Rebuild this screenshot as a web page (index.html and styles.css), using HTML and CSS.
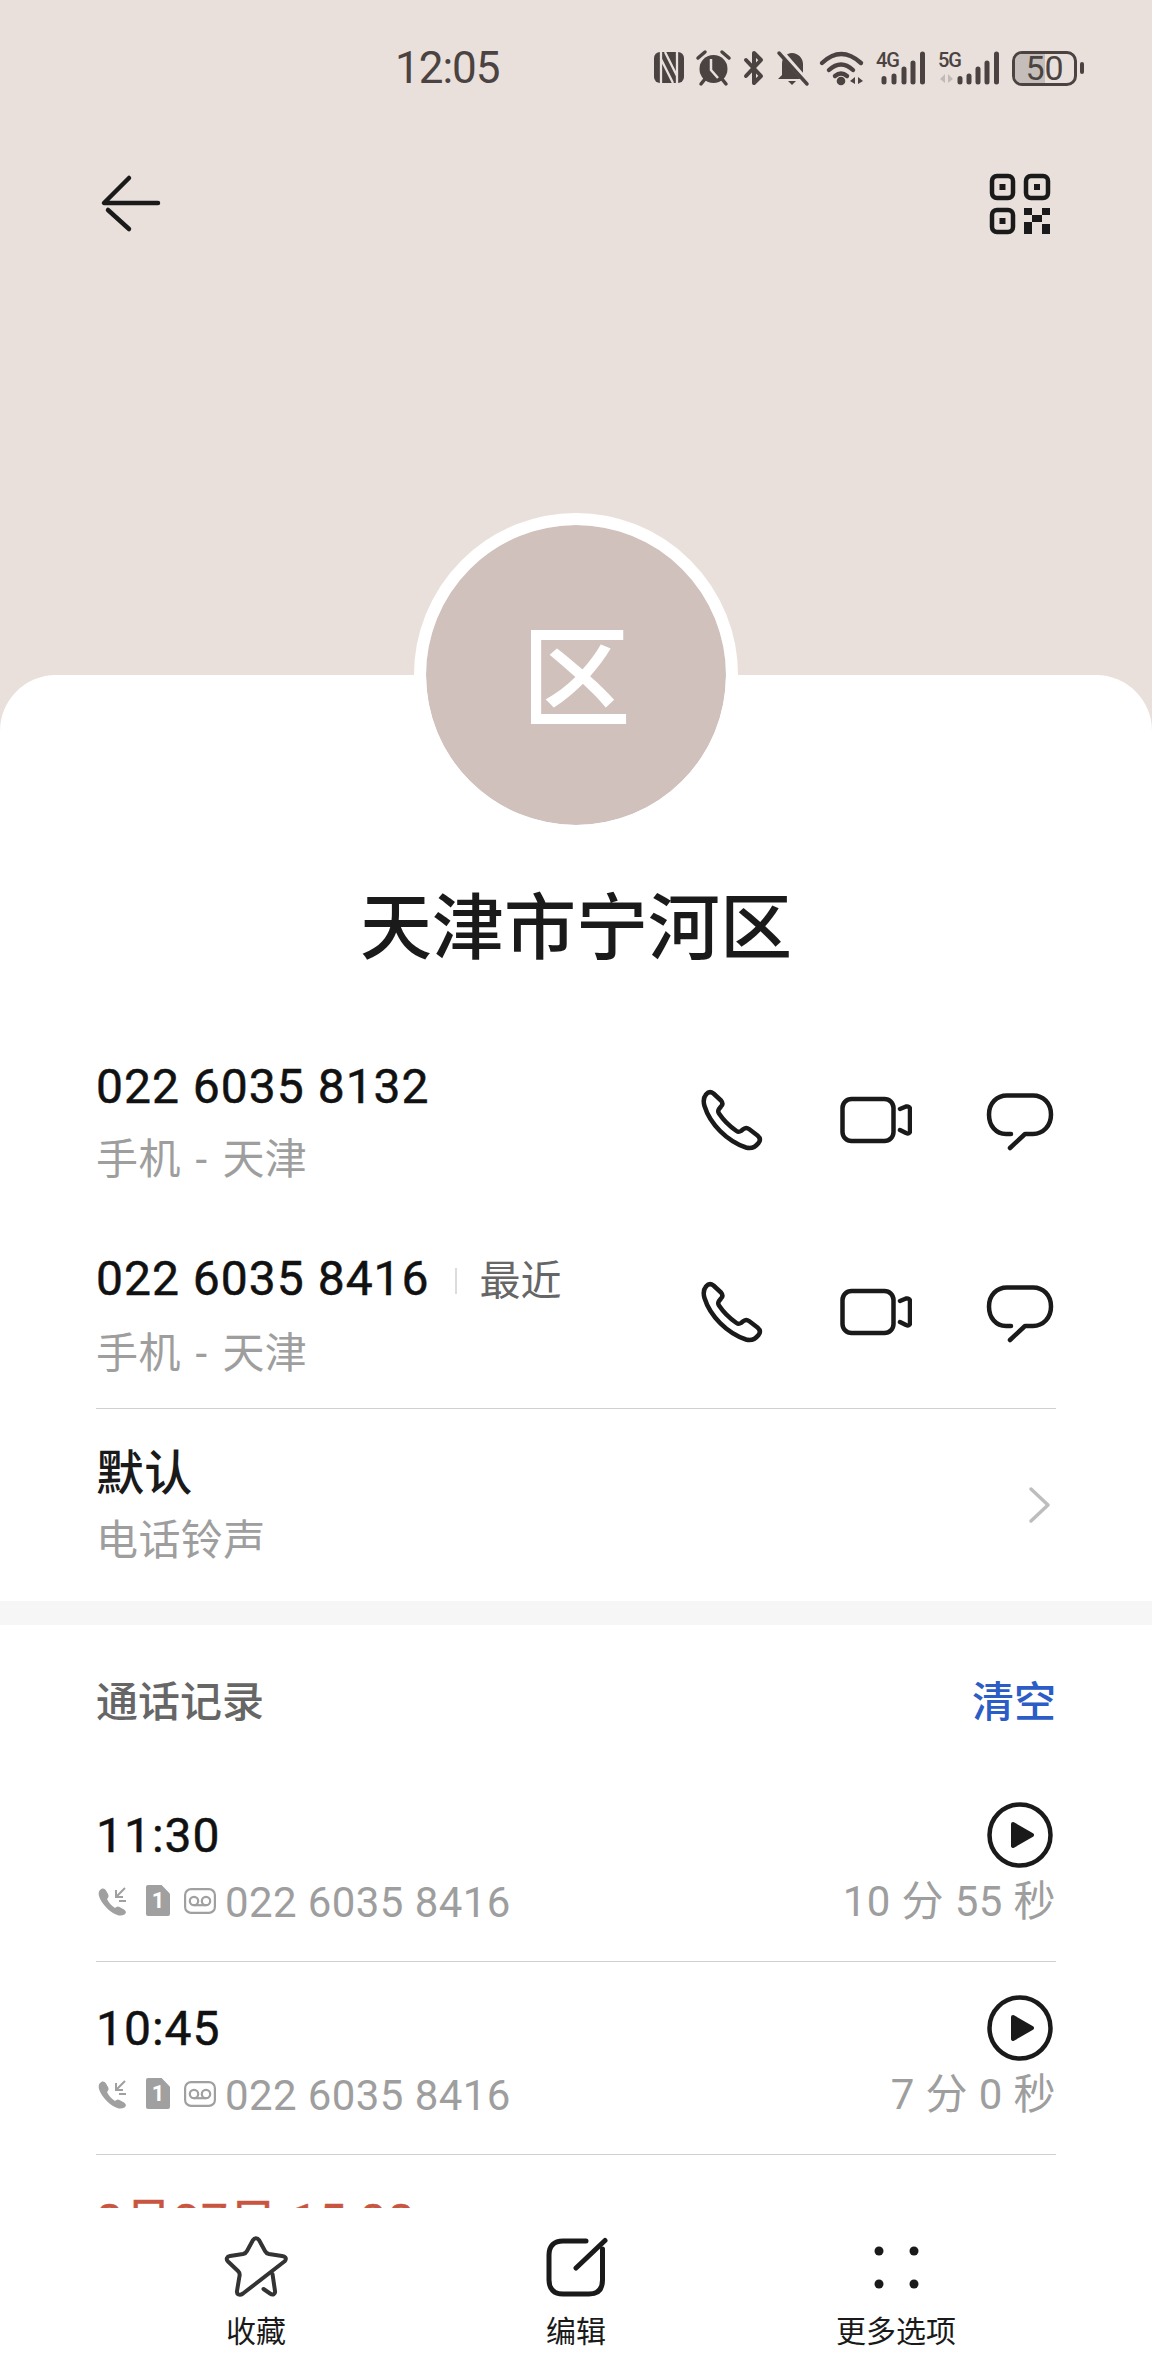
FILE: index.html
```html
<!DOCTYPE html>
<html lang="zh">
<head>
    <meta charset="utf-8">
    <title>天津市宁河区</title>
    <link rel="stylesheet" href="styles.css">
</head>
<body>
    <!-- shared icons -->
    <svg class="defs" width="0" height="0">
        <symbol id="i-phone" viewBox="0 0 64 64">
            <path d="M6 6.500C8.500 3.500 11 3.500 13.500 5.500L21 12.500C23 14.800 23 16.500 21 18.500L19 21C18 22.500 18 24 19 25.500C23 31.500 30 38.500 36.500 43C38 44 39.500 44 41 43L43.500 41C45.500 39.500 47 39.500 49 41L57.500 47.500C60.500 50 60.500 52.500 58.500 55C55 59.500 51 61 46 59.500C27 53 10 36 4.500 18C3 13 3.500 9.500 6 6.500Z" fill="none" stroke="#1a1a1a" stroke-width="4.500" stroke-linejoin="round"/>
        </symbol>
        <symbol id="i-video" viewBox="0 0 72 64">
            <rect x="2.500" y="11" width="51" height="42" rx="9" fill="none" stroke="#1a1a1a" stroke-width="4.500"/>
            <path d="M60 21L66 18.500C68.500 18 70 19.500 70 21V43C70 45 68.500 46 66 45L60 42" fill="none" stroke="#1a1a1a" stroke-width="4.500" stroke-linecap="round" stroke-linejoin="round"/>
        </symbol>
        <symbol id="i-msg" viewBox="0 0 70 64">
            <path d="M26 46H21C11 46 4 38 4 26.500C4 15 12 7.500 22 7.500H48C58 7.500 66 15 66 26.500C66 38 58 46 48 46H40L25 60" fill="none" stroke="#1a1a1a" stroke-width="4.500" stroke-linecap="round" stroke-linejoin="round"/>
        </symbol>
        <symbol id="i-play" viewBox="0 0 66 66">
            <circle cx="33" cy="33" r="30.500" fill="none" stroke="#1a1a1a" stroke-width="4.500"/>
            <path d="M26 22L45 33L26 44Z" fill="#1a1a1a" stroke="#1a1a1a" stroke-width="4" stroke-linejoin="round"/>
        </symbol>
        <symbol id="i-callin" viewBox="0 0 32 30">
            <path d="M3.500 4.500C6 1.500 8.500 2 10 4.500L12 8C13 10 12.500 11.500 11 13C13 17 15 19.500 19 22C20.500 20.500 22 20 23.500 21L28 23.500C30.500 25.500 30.500 27 28.500 28.500C25 30.500 21 29.500 17 27C10 22.500 4.500 15 3 10C2.500 8 2.500 6 3.500 4.500Z" fill="#a0a0a0"/>
            <path d="M29 2L20 11M20 4V11H27M23 15H30" fill="none" stroke="#a0a0a0" stroke-width="2"/>
        </symbol>
        <symbol id="i-voicemail" viewBox="0 0 32 26">
            <rect x="1.100" y="1.100" width="29.800" height="23.800" rx="6" fill="none" stroke="#a0a0a0" stroke-width="2.200"/>
            <circle cx="10" cy="13" r="4.200" fill="none" stroke="#a0a0a0" stroke-width="2.200"/>
            <circle cx="22" cy="13" r="4.200" fill="none" stroke="#a0a0a0" stroke-width="2.200"/>
            <path d="M10 17.200H22" stroke="#a0a0a0" stroke-width="2.200"/>
        </symbol>
    </svg>

    <div class="screen">
        <header class="hero">
            <div class="statusbar">
                <span class="clock">12:05</span>
                <div class="status-icons">
                    <!-- nfc -->
                    <svg class="si" width="30" height="36" viewBox="0 0 30 36">
                        <rect y="2" width="30" height="31" rx="6" fill="#4a4341"/>
                        <path d="M7 2V33M23 2V33M11 2L23 26M7 9L19 33" fill="none" stroke="#e8e0dc" stroke-width="2.300"/>
                    </svg>
                    <!-- alarm -->
                    <svg class="si" width="35" height="36" viewBox="0 0 35 36">
                        <circle cx="17.500" cy="19" r="14" fill="#4a4341"/>
                        <path d="M15 9V20L22 28" fill="none" stroke="#e8e0dc" stroke-width="2.500"/>
                        <path d="M2 8L9 2M33 8L26 2M5 34L9 29M30 34L26 29" fill="none" stroke="#4a4341" stroke-width="3.500" stroke-linecap="round"/>
                    </svg>
                    <!-- bluetooth -->
                    <svg class="si" width="22" height="36" viewBox="0 0 22 36">
                        <path d="M3 10L18 26L11 33V3L18 10L3 26" fill="none" stroke="#4a4341" stroke-width="4" stroke-linejoin="round" stroke-linecap="round"/>
                    </svg>
                    <!-- muted bell -->
                    <svg class="si" width="31" height="36" viewBox="0 0 31 36">
                        <path d="M15 3C9 3 5 8 5 14V25L1 29H29L26 25V14C26 8 21 3 15 3Z" fill="#4a4341"/>
                        <path d="M11 31H19L15 35Z" fill="#4a4341"/>
                        <path d="M3 1L30 32" stroke="#e8e0dc" stroke-width="6"/>
                        <path d="M2 3L30 34" stroke="#4a4341" stroke-width="3.500" stroke-linecap="round"/>
                    </svg>
                    <!-- wifi -->
                    <svg class="si" width="44" height="36" viewBox="0 0 44 36">
                        <path d="M2 13Q21 -5 41 13M9 20Q21 9 33 20M15 26Q21 21 27 26" fill="none" stroke="#4a4341" stroke-width="4.400" stroke-linecap="round"/>
                        <circle cx="21" cy="31" r="4.300" fill="#4a4341"/>
                        <path d="M35 27V34L30 31ZM38 27V34L43 31Z" fill="#4a4341"/>
                    </svg>
                    <!-- 4g signal -->
                    <svg class="si" width="50" height="36" viewBox="0 0 50 36">
                        <text class="net" x="0" y="17">4G</text>
                        <path d="M8 28.500V32M18 26V32M28 19V32M37 13V32M46.500 4V32" fill="none" stroke="#4a4341" stroke-width="5" stroke-linecap="round"/>
                    </svg>
                    <!-- 5g signal -->
                    <svg class="si" width="62" height="36" viewBox="0 0 62 36">
                        <text class="net" x="0" y="17">5G</text>
                        <path d="M7 24V33L2 29ZM10 24V33L15 29Z" fill="#c0bab6"/>
                        <path d="M22 28.500V32M31 26V32M40 19V32M49 13V32M58.500 4V32" fill="none" stroke="#4a4341" stroke-width="5" stroke-linecap="round"/>
                    </svg>
                    <div class="battery">
                        <div class="battery-body">
                            <div class="battery-fill"></div>
                            <span class="battery-text">50</span>
                        </div>
                        <div class="battery-nub"></div>
                    </div>
                </div>
            </div>
            <nav class="topnav">
                <svg width="64" height="64" viewBox="0 0 64 64">
                    <path d="M31 6L6 31H60M10 38L31 57" fill="none" stroke="#1a1a1a" stroke-width="4.500" stroke-linecap="round" stroke-linejoin="round"/>
                </svg>
                <svg width="64" height="64" viewBox="0 0 64 64">
                    <g fill="none" stroke="#1a1a1a" stroke-width="4.500">
                        <rect x="4" y="4" width="21" height="22" rx="5"/>
                        <rect x="38" y="4" width="22" height="22" rx="5"/>
                        <rect x="4" y="38" width="21" height="22" rx="5"/>
                    </g>
                    <g fill="#1a1a1a">
                        <rect x="11.500" y="12" width="6" height="6"/>
                        <rect x="46" y="12" width="6" height="6"/>
                        <rect x="11.500" y="46" width="6" height="6"/>
                        <rect x="36" y="36" width="8" height="7"/>
                        <rect x="54" y="36" width="8" height="7"/>
                        <rect x="44" y="43" width="10" height="7"/>
                        <rect x="36" y="50" width="8" height="12"/>
                        <rect x="54" y="52" width="8" height="10"/>
                    </g>
                </svg>
            </nav>
        </header>

        <main class="card">
            <div class="avatar">区</div>
            <h1 class="name">天津市宁河区</h1>

            <div class="number-row">
                <div>
                    <div class="main-line digits">022 6035 8132</div>
                    <div class="sub-line">手机 - 天津</div>
                </div>
                <div class="actions">
                    <span class="action"><svg width="64" height="64"><use href="#i-phone"/></svg></span>
                    <span class="action"><svg width="72" height="64"><use href="#i-video"/></svg></span>
                    <span class="action"><svg width="70" height="64"><use href="#i-msg"/></svg></span>
                </div>
            </div>
            <div class="number-row">
                <div>
                    <div class="main-line digits">022 6035 8416<span class="recent">最近</span></div>
                    <div class="sub-line">手机 - 天津</div>
                </div>
                <div class="actions">
                    <span class="action"><svg width="64" height="64"><use href="#i-phone"/></svg></span>
                    <span class="action"><svg width="72" height="64"><use href="#i-video"/></svg></span>
                    <span class="action"><svg width="70" height="64"><use href="#i-msg"/></svg></span>
                </div>
            </div>

            <div class="ringtone">
                <div>
                    <div class="main-line">默认</div>
                    <div class="sub-line">电话铃声</div>
                </div>
                <svg width="26" height="40" viewBox="0 0 26 40">
                    <path d="M4 4L21 20L4 36" fill="none" stroke="#bdbdbd" stroke-width="3.500" stroke-linecap="round" stroke-linejoin="round"/>
                </svg>
            </div>

            <div class="band"></div>

            <div class="log-head">
                <span class="log-title">通话记录</span>
                <span class="log-clear">清空</span>
            </div>

            <div class="log-row">
                <div>
                    <div class="main-line digits">11:30</div>
                    <div class="log-meta">
                        <svg class="ic-call" width="32" height="30"><use href="#i-callin"/></svg>
                        <span class="sim">1</span>
                        <svg class="ic-vm" width="32" height="26"><use href="#i-voicemail"/></svg>
                        <span class="sub-line">022 6035 8416</span>
                    </div>
                </div>
                <div class="log-right">
                    <svg width="66" height="66"><use href="#i-play"/></svg>
                    <div class="sub-line">10 分 55 秒</div>
                </div>
            </div>
            <div class="log-row">
                <div>
                    <div class="main-line digits">10:45</div>
                    <div class="log-meta">
                        <svg class="ic-call" width="32" height="30"><use href="#i-callin"/></svg>
                        <span class="sim">1</span>
                        <svg class="ic-vm" width="32" height="26"><use href="#i-voicemail"/></svg>
                        <span class="sub-line">022 6035 8416</span>
                    </div>
                </div>
                <div class="log-right">
                    <svg width="66" height="66"><use href="#i-play"/></svg>
                    <div class="sub-line">7 分 0 秒</div>
                </div>
            </div>
            <div class="log-row">
                <div class="main-line digits missed">8月27日 15:08</div>
            </div>
        </main>
    </div>

    <footer class="toolbar">
        <div class="tool">
            <svg width="64" height="64" viewBox="0 0 64 64">
                <path d="M39.500 53L46 57.500C49 59.500 51.500 58 51 55L48.500 38" fill="none" stroke="#333" stroke-width="4" stroke-linecap="round" stroke-linejoin="round"/>
                <path d="M19 57.500L61 25C63 22 61 20.500 58 20L45 18C43 17.500 42 17 41 15L35 4C33.500 1.500 30.500 1.500 29 4L23 15C22 17 21 17.500 19 18L6 20C3 20.500 1.500 23 4 25.500L14 35C15.500 36.500 16 38 15.500 40L13 55C12.500 58.500 15.500 60 19 57.500Z" fill="none" stroke="#333" stroke-width="4" stroke-linejoin="round"/>
            </svg>
            <span class="tool-label">收藏</span>
        </div>
        <div class="tool">
            <svg width="64" height="64" viewBox="0 0 64 64">
                <path d="M42 5H19C10 5 5 10 5 19V44C5 53 10 58 19 58H45C54 58 58.500 53 58.500 44V13" fill="none" stroke="#1a1a1a" stroke-width="5" stroke-linecap="round"/>
                <path d="M61 4.500L32 32" stroke="#1a1a1a" stroke-width="5" stroke-linecap="round"/>
            </svg>
            <span class="tool-label">编辑</span>
        </div>
        <div class="tool">
            <svg width="64" height="64" viewBox="0 0 64 64">
                <circle cx="15" cy="15" r="4.500" fill="#1a1a1a"/>
                <circle cx="50" cy="15" r="4.500" fill="#1a1a1a"/>
                <circle cx="15" cy="48" r="4.500" fill="#1a1a1a"/>
                <circle cx="50" cy="48" r="4.500" fill="#1a1a1a"/>
            </svg>
            <span class="tool-label">更多选项</span>
        </div>
    </footer>
</body>
</html>
```

FILE: styles.css
```css
* {
    box-sizing: border-box;
}

html, body {
    margin: 0;
    padding: 0;
}

body {
    width: 1152px;
    height: 2376px;
    display: flex;
    flex-direction: column;
    overflow: hidden;
    background: #fff;
    color: #1a1a1a;
    font-family: Roboto, "Noto Sans CJK SC", sans-serif;
}

.defs {
    position: absolute;
}

.screen {
    height: 2208px;
    overflow: hidden;
    background: #e9e0db;
}

/* top tinted area */
.hero {
    height: 675px;
    padding-top: 50px;
}

.statusbar {
    display: flex;
    justify-content: space-between;
    align-items: center;
    height: 36px;
    padding: 0 68px 0 395px;
}

.clock {
    font-size: 44px;
    line-height: 36px;
    letter-spacing: -1px;
    color: #4a4341;
}

.status-icons {
    display: flex;
    align-items: center;
}

.si {
    display: block;
    margin-right: 12px;
    overflow: visible;
}

.net {
    font-family: Roboto, sans-serif;
    font-size: 20px;
    font-weight: 500;
    letter-spacing: -1px;
    fill: #4a4341;
}

.battery {
    display: flex;
    align-items: center;
}

.battery-body {
    position: relative;
    display: flex;
    align-items: center;
    justify-content: center;
    width: 65px;
    height: 35px;
    border: 3px solid #4a4341;
    border-radius: 10px;
}

.battery-fill {
    position: absolute;
    left: 0;
    top: 0;
    bottom: 0;
    width: 50%;
    border-radius: 7px 0 0 7px;
    background: #c4bdb9;
}

.battery-text {
    position: relative;
    font-size: 34px;
    line-height: 29px;
    color: #4a4341;
}

.battery-nub {
    width: 4px;
    height: 12px;
    margin-left: 3px;
    border-radius: 2px;
    background: #4a4341;
}

.topnav {
    display: flex;
    justify-content: space-between;
    padding: 86px 100px 0 98px;
}

/* white sheet */
.card {
    background: #fff;
    border-radius: 56px 56px 0 0;
    height: 1533px;
}

.avatar {
    display: flex;
    align-items: center;
    justify-content: center;
    width: 324px;
    height: 324px;
    margin: 0 auto;
    padding-bottom: 10px;
    position: relative;
    top: -162px;
    margin-bottom: -162px;
    border: 12px solid #fff;
    border-radius: 50%;
    background: #d0c1bc;
    background-clip: padding-box;
    color: #fff;
    font-size: 110px;
    font-weight: 500;
}

.name {
    margin: 42px 0 45px;
    font-size: 72px;
    line-height: 100px;
    font-weight: 500;
    text-align: center;
}

.number-row {
    display: flex;
    justify-content: space-between;
    height: 192px;
    padding: 27px 60px 0 96px;
}

.main-line {
    font-size: 48px;
    line-height: 72px;
    font-weight: 500;
    letter-spacing: 0.2px;
    white-space: nowrap;
}

.digits {
    font-weight: 400;
    letter-spacing: 1px;
    color: #111;
    -webkit-text-stroke: 0.5px currentColor;
}

.sub-line {
    font-size: 42px;
    line-height: 62px;
    letter-spacing: 0.4px;
    color: #9e9e9e;
    white-space: nowrap;
}

.number-row .sub-line {
    line-height: 74px;
    word-spacing: 4px;
}

.recent {
    font-size: 41px;
    letter-spacing: 0;
    color: #666;
    margin-left: 25px;
    padding-left: 25px;
    -webkit-text-stroke: 0;
    background: linear-gradient(#dcdcdc, #dcdcdc) left center / 2px 26px no-repeat;
}

.actions {
    display: flex;
    align-items: center;
    margin-top: -27px;
}

.action {
    display: flex;
    justify-content: center;
    width: 144px;
}

.ringtone {
    display: flex;
    justify-content: space-between;
    align-items: center;
    margin: 0 96px;
    padding: 29px 3px 29px 0;
    border-top: 1px solid #cfcfcf;
}

.band {
    height: 24px;
    background: #f6f6f6;
}

.log-head {
    display: flex;
    justify-content: space-between;
    padding: 48px 96px 36px;
    font-size: 42px;
    line-height: 60px;
    font-weight: 500;
}

.log-title {
    color: #666;
}

.log-clear {
    color: #2c5cc5;
}

.log-row {
    display: flex;
    justify-content: space-between;
    height: 193px;
    margin: 0 96px;
    padding-top: 31px;
    border-bottom: 1px solid #cfcfcf;
}

.log-row:last-child {
    border-bottom: none;
}

.log-meta {
    display: flex;
    align-items: center;
    height: 62px;
}

.log-meta svg,
.sim {
    margin-bottom: 5px;
}

.ic-call {
    margin-right: 18px;
}

.sim {
    width: 24px;
    height: 31px;
    margin-right: 14px;
    background: #a0a0a0;
    clip-path: polygon(0 0, 65% 0, 100% 28%, 100% 100%, 0 100%);
    border-radius: 2px;
    color: #fff;
    font-size: 22px;
    font-weight: 700;
    line-height: 32px;
    text-align: center;
}

.ic-vm {
    margin-right: 9px;
}

.log-right {
    display: flex;
    flex-direction: column;
    align-items: flex-end;
    margin-top: 2px;
}

.log-right svg {
    display: block;
    margin-right: 3px;
    margin-bottom: 3px;
}

.missed {
    color: #c8553f;
}

/* bottom actions */
.toolbar {
    display: grid;
    grid-template-columns: repeat(3, 1fr);
    height: 168px;
    padding: 28px 96px 0;
    background: #fff;
}

.tool {
    display: flex;
    flex-direction: column;
    align-items: center;
}

.tool svg {
    display: block;
}

.tool-label {
    margin-top: 12px;
    font-size: 30px;
    line-height: 40px;
}
```
